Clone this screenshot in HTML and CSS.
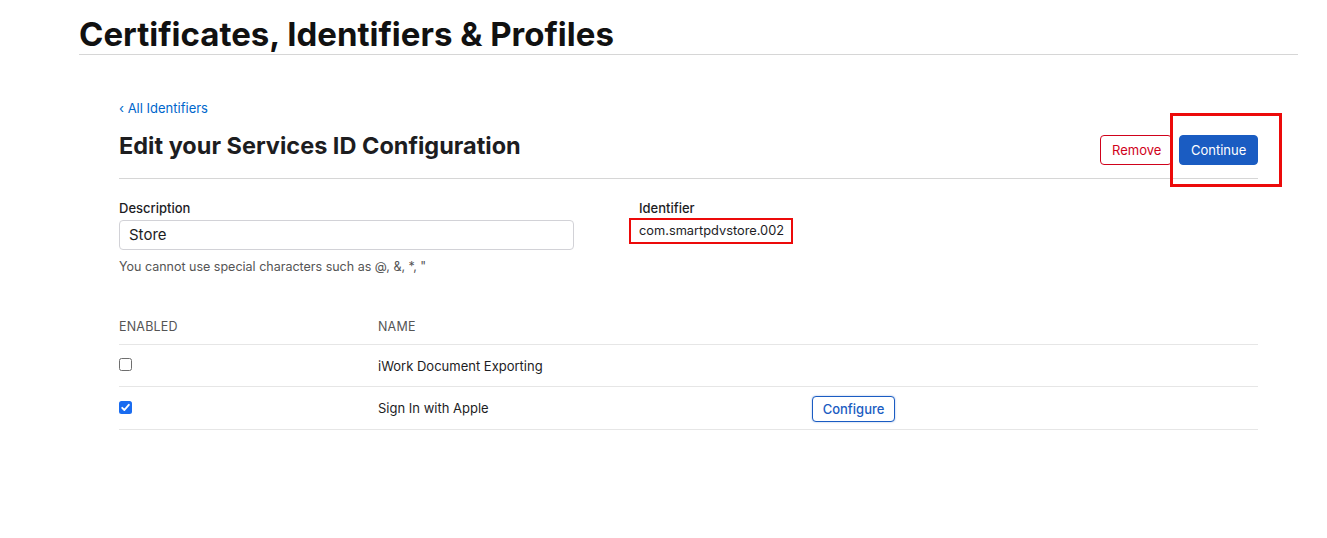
FILE: index.html
```html
<!DOCTYPE html>
<html lang="en">
<head>
<meta charset="utf-8">
<title>Certificates, Identifiers &amp; Profiles</title>
<link rel="stylesheet" href="styles.css">
</head>
<body>
<div class="page">
  <header class="page-header">
    <h1 class="page-title">Certificates, Identifiers &amp; Profiles</h1>
  </header>
  <main class="content">
    <a class="back-link" href="#">&#8249; All Identifiers</a>
    <div class="heading-row">
      <h2 class="section-title">Edit your Services ID Configuration</h2>
      <div class="actions">
        <button class="btn btn-remove">Remove</button>
        <div class="highlight-wrap">
          <button class="btn btn-continue">Continue</button>
          <span class="annot annot-continue"></span>
        </div>
      </div>
    </div>
    <div class="form-row">
      <div class="field field-desc">
        <label class="field-label">Description</label>
        <div class="text-input">Store</div>
        <p class="hint">You cannot use special characters such as @, &amp;, *, "</p>
      </div>
      <div class="field field-id">
        <label class="field-label">Identifier</label>
        <div class="id-value">com.smartpdvstore.002<span class="annot annot-id"></span></div>
      </div>
    </div>
    <div class="table">
      <div class="trow thead">
        <div>ENABLED</div>
        <div>NAME</div>
        <div></div>
      </div>
      <div class="trow">
        <div><span class="cb"></span></div>
        <div>iWork Document Exporting</div>
        <div></div>
      </div>
      <div class="trow">
        <div><span class="cb cb-on"><svg viewBox="0 0 13 13" width="13" height="13"><path d="M3.2 6.8 L5.4 9 L9.8 3.8" fill="none" stroke="#fff" stroke-width="1.9" stroke-linecap="round" stroke-linejoin="round"/></svg></span></div>
        <div>Sign In with Apple</div>
        <div><button class="btn-config">Configure</button></div>
      </div>
    </div>
  </main>
</div>
</body>
</html>
```

FILE: styles.css
```css
* { box-sizing: border-box; }
html, body { margin: 0; padding: 0; background: #fff; }
body {
  font-family: Inter, "Noto Sans", "Liberation Sans", sans-serif;
  color: #1d1d1f;
}
.page {
  margin-left: 79px;
  width: 1219px;
}
.page-header {
  border-bottom: 1px solid #d6d6d6;
  padding-top: 14px;
  height: 55px;
}
.page-title {
  margin: 0;
  font-size: 33px;
  line-height: 40px;
  font-weight: 700;
  letter-spacing: 0;
  color: #111;
}
.content {
  padding: 44px 40px 0 40px;
}
.back-link {
  display: block;
  font-size: 13px;
  line-height: 18px;
  color: #0066cc;
  text-decoration: none;
}
.heading-row {
  display: flex;
  justify-content: space-between;
  align-items: flex-end;
  border-bottom: 1px solid #d6d6d6;
  height: 62px;
  padding-bottom: 13px;
}
.section-title {
  margin: 0 0 4px 0;
  font-size: 23.5px;
  line-height: 30px;
  font-weight: 700;
  color: #1d1d1f;
  letter-spacing: 0;
}
.actions {
  display: flex;
  gap: 7px;
  align-items: center;
}
.btn {
  height: 30px;
  padding: 0 11px;
  font-family: inherit;
  font-size: 13px;
  border-radius: 4px;
  cursor: pointer;
}
.btn-remove {
  width: 72px;
  background: #fff;
  border: 1px solid #d0021b;
  color: #d0021b;
}
.btn-continue {
  width: 79px;
  background: #1a5cc2;
  border: 1px solid #1a5cc2;
  color: #fff;
}
.highlight-wrap { position: relative; }
.annot {
  position: absolute;
  border: 3px solid #ec0a0a;
  pointer-events: none;
}
.annot-continue {
  left: -9px;
  top: -22px;
  width: 112px;
  height: 74px;
}
.form-row {
  display: flex;
  gap: 65px;
  padding-top: 21px;
}
.field-desc { width: 455px; }
.field-label {
  display: block;
  font-size: 13px;
  line-height: 16px;
  font-weight: 500;
  color: #1d1d1f;
}
.text-input {
  margin-top: 4px;
  height: 30px;
  border: 1px solid #d2d2d7;
  border-radius: 4px;
  padding: 0 9px;
  font-size: 15px;
  line-height: 28px;
  color: #1d1d1f;
}
.hint {
  margin: 8px 0 0 0;
  font-size: 12.5px;
  line-height: 17px;
  color: #555;
}
.id-value {
  position: relative;
  margin-top: 6px;
  font-size: 12.8px;
  line-height: 17px;
  color: #1d1d1f;
}
.annot-id {
  border-width: 2px;
  left: -10px;
  top: -4px;
  width: 164px;
  height: 26px;
}
.table {
  margin-top: 44px;
}
.trow {
  display: grid;
  grid-template-columns: 259px 434px 1fr;
  align-items: center;
  border-bottom: 1px solid #e6e6e6;
  height: 42px;
  font-size: 13px;
  color: #1d1d1f;
}
.trow.thead {
  height: 26px;
  align-items: flex-start;
  color: #555;
  font-size: 12.5px;
  letter-spacing: 0.2px;
}
.trow:last-child { height: 43px; }
.cb {
  display: block;
  width: 13px;
  height: 13px;
  border: 1px solid #6e6e6e;
  border-radius: 2.5px;
  margin-top: -2px;
  background: #fff;
}
.cb-on {
  border: none;
  background: #1a6cf0;
}
.cb-on svg { display: block; }
.btn-config {
  height: 26px;
  width: 83px;
  background: #fff;
  border: 1px solid #1a5cc2;
  border-radius: 4px;
  color: #1a5cc2;
  font-family: inherit;
  font-size: 13px;
  font-weight: 500;
  box-shadow: 0 0 2px rgba(26, 92, 194, 0.45);
  margin-top: 2px;
}
```
